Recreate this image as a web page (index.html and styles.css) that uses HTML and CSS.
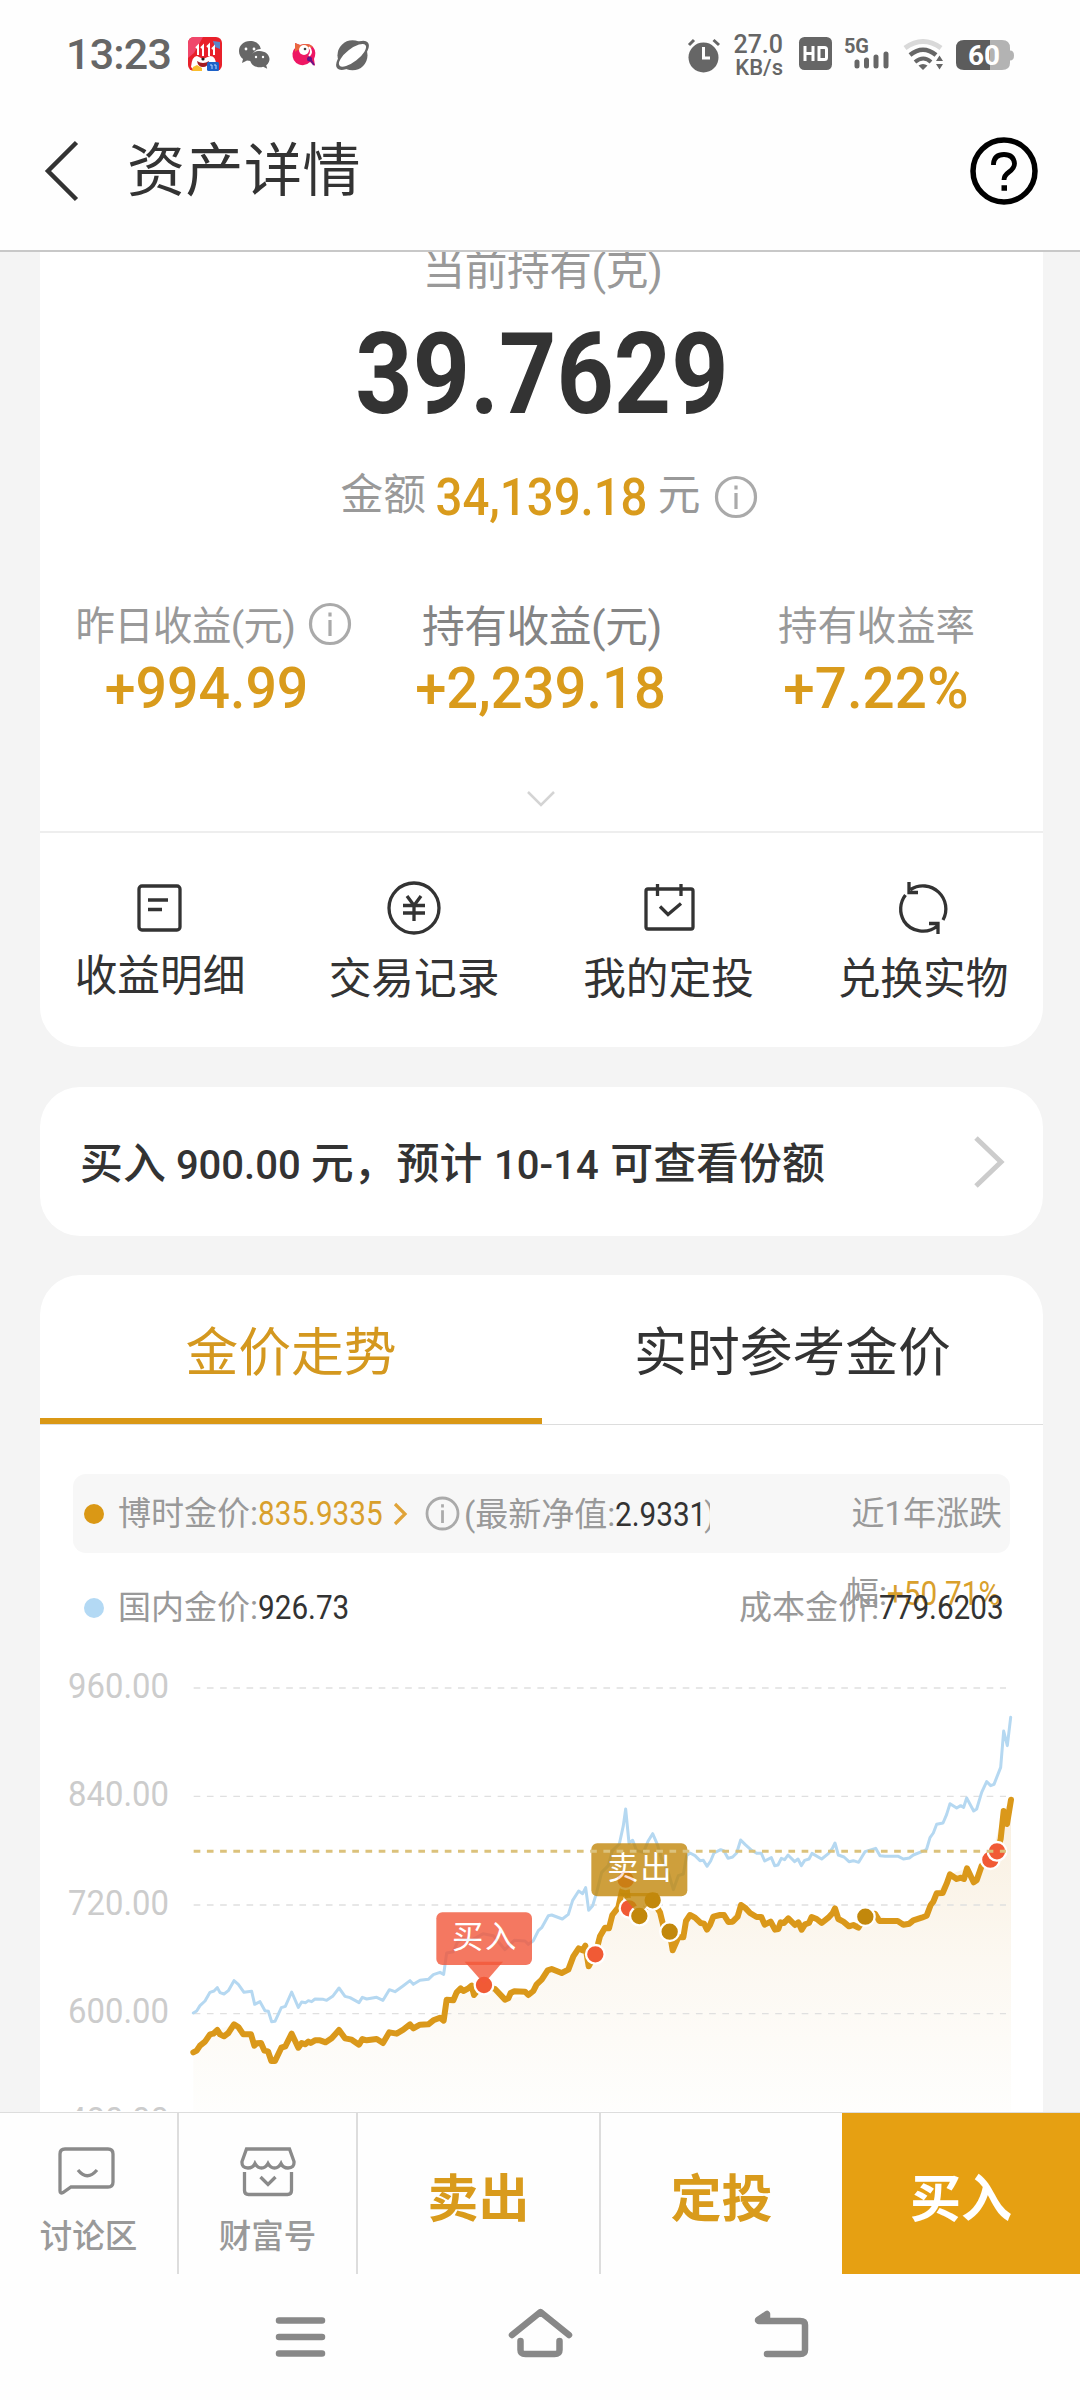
FILE: index.html
```html
<!DOCTYPE html>
<html lang="zh-CN">
<head>
<meta charset="utf-8">
<title>资产详情</title>
<link rel="stylesheet" href="styles.css">
</head>
<body>
<header class="top">
  <div class="status">
    <span class="clock">13:23</span>
    <svg class="st-left" width="182" height="38" viewBox="187 35 182 38">
      <rect x="188" y="37" width="34" height="34" rx="6" fill="#e8202a"/>
      <path d="M188 44q0-7 6-7h9l-9 16-6 5z" fill="#f0476b"/>
      <path d="M213 41l7 1v7l-5-2z" fill="#5a86c8"/>
      <path d="M196 48l2-2v9M201 48l2-2v10M207 47l2-2v11M212 49l2-2v8" fill="none" stroke="#fff" stroke-width="2"/>
      <path d="M191 67q1-11 6-11l6 3 7-3q6 0 6 9l-8 6h-13z" fill="#fff"/>
      <path d="M197 61q6 4 12 0-1 6-6 6t-6-6z" fill="#a31b22"/>
      <circle cx="203" cy="59" r="1.6" fill="#222"/>
      <path d="M193 67l4-2 5 3v3h-10z" fill="#f9bd2c"/>
      <rect x="207" y="62" width="12" height="9" rx="1.500" fill="#1c62c8"/>
      <path d="M210 65h2v4M214 65h2v4" stroke="#b7d5ff" fill="none"/>
      <g fill="#666">
        <path d="M250 41c-6.500 0-11 4.500-11 10 0 3.500 1.500 6 4 8l-1 4 5-2.500c2 .5 4 .5 5 .3-1.500-7 3-11.500 8.800-11.800-.9-5-5.300-8-10.800-8z"/>
        <path d="M259.500 51c-5.500 0-9.500 3.600-9.500 8s4 8.300 9.500 8.300c1.300 0 2.600-.2 3.700-.6l4 2-1-3.500c2.300-1.600 3.300-3.900 3.300-6.200 0-4.400-4.500-8-10-8z"/>
      </g>
      <g fill="#fff"><circle cx="246" cy="49" r="1.400"/><circle cx="254" cy="49" r="1.400"/><circle cx="256" cy="57" r="1.200"/><circle cx="263" cy="57" r="1.200"/></g>
      <path d="M295 43l5 2q9-3 13 2 4 5 1 12l1 7-5-4q-5 5-11 2.500-7-3-6.500-11 .5-4 3-6z" fill="#ee1764"/>
      <path d="M295 43l5 2q9-3 13 2l-9 3q-7-1-9 2z" fill="#e9683f"/>
      <circle cx="304" cy="50" r="5" fill="#fff"/>
      <circle cx="305" cy="49" r="1.300" fill="#444"/>
      <path d="M309 47q4 5 0 9" stroke="#fff" stroke-width="2" fill="none"/>
      <circle cx="309.500" cy="59" r="2.500" fill="#6a1286"/><path d="M310 59l4 6" stroke="#6a1286" stroke-width="2"/>
      <ellipse cx="352.500" cy="55.300" rx="20" ry="9" transform="rotate(-40 352.500 55.300)" fill="#666"/>
      <circle cx="352.500" cy="55.300" r="15" fill="#666"/>
      <ellipse cx="352.500" cy="55.300" rx="16.500" ry="6.300" transform="rotate(-38 352.500 55.300)" fill="#fff"/>
    </svg>
    <div class="st-right">
      <svg width="34" height="36" viewBox="686 37 34 36">
        <circle cx="702.500" cy="57.500" r="15" fill="#666"/>
        <path d="M688 45l5-5M712.500 40l5.500 5" stroke="#666" stroke-width="3"/>
        <path d="M702.500 47v11h6.500" stroke="#fff" stroke-width="3" fill="none"/>
      </svg>
      <div class="speed"><b>27.0</b><span>KB/s</span></div>
      <svg width="222" height="42" viewBox="796 33 222 42">
        <rect x="798" y="37" width="33" height="33" rx="5.500" fill="#666"/>
        <path d="M804 46v15M812 46v15M804 53.500h8M818 47.500h5.500q2 0 2 2v8q0 2-2 2h-5.500z" fill="none" stroke="#fff" stroke-width="3"/>
        <text x="843" y="52.500" class="g5" textLength="25">5G</text>
        <path d="M856 62v4M865.500 60v6M875 57v9M885 54v12" stroke="#666" stroke-width="5" stroke-linecap="round"/>
        <g fill="none">
          <path d="M904 48q18-13 36 0" stroke="#d9d9d9" stroke-width="5"/>
          <path d="M909 55q13-10.500 26 0" stroke="#666" stroke-width="4.500"/>
          <path d="M914 62q8.500-7 16 0" stroke="#666" stroke-width="4"/>
        </g>
        <path d="M922 70l-4.500-4.500q4.500-3 9 0zM935 61l3.500-5.500 3.500 5.500zM935 64l3.500 5.500 3.500-5.500z" fill="#666"/>
        <path d="M989 40h12q8 0 8 8v2.500q4 0 4 5t-4 5v2.500q0 7-8 7h-12z" fill="#b3b3b3"/>
        <path d="M963 40h26v30h-26q-8 0-8-7v-15q0-8 8-8z" fill="#5c5c5c"/>
        <text x="967" y="65" class="batt" textLength="32" lengthAdjust="spacingAndGlyphs">60</text>
      </svg>
    </div>
  </div>
  <div class="nav">
    <svg width="36" height="62" viewBox="44 140 36 62"><path d="M76.500 142.500L48 171l28.500 28.500" fill="none" stroke="#333" stroke-width="4.500"/></svg>
    <h1>资产详情</h1>
    <svg class="help" width="70" height="70" viewBox="0 0 70 70" fill="none" stroke="#000"><circle cx="35" cy="35" r="31" stroke-width="5.500"/><path d="M24.500 29v-1.500q1-9 10.500-9t10.500 9q0 4.500-5.500 8.500-5 3.500-5 8" stroke-width="4.800"/><path d="M32.500 52h5.500" stroke-width="5.500"/></svg>
  </div>
</header>

<main class="page">
  <section class="card asset">
    <p class="hold-label">当前持有(克)</p>
    <div class="hold"><span>39.7629</span></div>
    <div class="amount">
      <span class="cn">金额</span><span class="amount-num"><i>34,139.18</i></span><span class="cn">元</span>
      <svg class="info" viewBox="0 0 44 44"><circle cx="22" cy="22" r="19.500"/><path d="M22 18v16M22 10.500v4"/></svg>
    </div>
    <div class="stats">
      <div class="stat"><div class="stat-label s1"><span>昨日收益(元)</span><svg class="info" viewBox="0 0 44 44"><circle cx="22" cy="22" r="19.500"/><path d="M22 18v16M22 10.500v4"/></svg></div><div class="stat-num n1">+994.99</div></div>
      <div class="stat"><div class="stat-label s2"><span>持有收益(元)</span></div><div class="stat-num n2">+2,239.18</div></div>
      <div class="stat"><div class="stat-label s3"><span>持有收益率</span></div><div class="stat-num n3">+7.22%</div></div>
    </div>
    <svg class="more" width="30" height="18" viewBox="0 0 30 18"><path d="M2 2l13 13L28 2" fill="none" stroke="#d4d4d4" stroke-width="2.500"/></svg>
    <nav class="actions">
      <a class="a1"><svg viewBox="0 0 54 54"><rect x="6" y="5" width="41" height="44" rx="3"/><path d="M15 19h20M15 28.500h14"/></svg>收益明细</a>
      <a><svg viewBox="0 0 54 54"><circle cx="27" cy="27" r="25"/><path d="M20 15l7 9.500 7-9.500M16 24.500h22M16 32h22M27 24.500V40"/></svg>交易记录</a>
      <a><svg viewBox="0 0 54 54"><rect x="4" y="8" width="47" height="40" rx="2"/><path d="M15.500 3v12M39 3v12M18 25.500l8 8 13-11"/></svg>我的定投</a>
      <a><svg viewBox="0 0 54 54"><path d="M8 40A23 23 0 0 1 9.500 14M14.500 8.500A23 23 0 0 1 47 39M42 44.500A23 23 0 0 1 7.500 39.500M13 1v10.500h9M42 53V42.500h-9"/></svg>兑换实物</a>
    </nav>
  </section>

  <section class="card notice">
    <p>买入<b class="c1">900.00</b>元，预计<b class="c2">10-14</b>可查看份额</p>
    <svg width="32" height="54" viewBox="0 0 32 54"><path d="M3 3l25 24L3 51" fill="none" stroke="#ccc" stroke-width="5"/></svg>
  </section>

  <section class="card trend">
    <div class="tabs"><a class="on">金价走势</a><a>实时参考金价</a></div>
    <div class="legend main">
      <i class="dot gold"></i><span>博时金价:</span><b class="w1 y">835.9335</b>
      <svg class="arr" width="16" height="24" viewBox="0 0 16 24"><path d="M3 2l10 10-10 10" fill="none" stroke="#e0a43a" stroke-width="3.200"/></svg>
      <svg class="info sm" viewBox="0 0 44 44"><circle cx="22" cy="22" r="19.500"/><path d="M22 18v16M22 10.500v4"/></svg>
      <span class="nav-val">(最新净值:<b class="w2">2.9331</b>)</span>
      <div class="change">近1年涨跌<br>幅:<b class="w5 y">+50.71%</b></div>
    </div>
    <div class="legend second">
      <i class="dot blue"></i><span>国内金价:</span><b class="w3">926.73</b>
      <span class="cost">成本金价:<b class="w4">779.6203</b></span>
    </div>
    <svg class="chart" width="1003" height="472" viewBox="-360 -60 3009 1416">
      <defs><linearGradient id="fill" gradientUnits="userSpaceOnUse" x1="0" y1="420" x2="0" y2="1380"><stop offset="0" stop-color="#f9efdf"/><stop offset=".5" stop-color="#fcf8f1"/><stop offset="1" stop-color="#fefefd"/></linearGradient></defs>
      <path fill="url(#fill)" d="M100 1180L172 1113 222 1096 273 1126 334 1206 395 1124 415 1166 537 1113 597 1157 669 1152 750 1096 851 1085 860 1022 902 988 972 978 1035 1022 1105 1008 1175 930 1205 942 1225 932 1256 868 1306 886 1335 806 1375 745 1397 665 1407 748 1438 770 1478 724 1529 818 1538 874 1570 835 1590 768 1641 812 1680 768 1705 789 1743 738 1804 774 1845 812 1885 778 1925 812 2005 776 2025 748 2050 788 2095 806 2145 764 2230 797 2300 770 2330 703 2370 646 2421 628 2441 670 2491 602 2531 456 2553 420V1380H100z"/>
      <g stroke="#e0e0e0" stroke-width="4" stroke-dasharray="20 19.650"><path d="M101 87H2538M101 412H2538M101 738H2538M101 1064H2538"/></g>
      <g class="axis"><text x="-276" y="116" textLength="303" lengthAdjust="spacingAndGlyphs">960.00</text><text x="-276" y="441" textLength="303" lengthAdjust="spacingAndGlyphs">840.00</text><text x="-276" y="767" textLength="303" lengthAdjust="spacingAndGlyphs">720.00</text><text x="-276" y="1092" textLength="303" lengthAdjust="spacingAndGlyphs">600.00</text><text x="-276" y="1418" textLength="303" lengthAdjust="spacingAndGlyphs">480.00</text></g>
      <polyline class="ln blue-ln" points="100,1062 110,1056 120,1040 135,1026 150,1000 162,996 172,986 180,1001 192,1005 205,995 222,965 235,976 252,1000 275,997 284,1036 300,1028 315,1055 325,1057 335,1088 345,1087 364,1046 376,1042 395,999 415,1045 425,1029 437,1031 445,1025 455,1028 465,1020 490,1021 500,1024 518,1012 537,987 555,1012 570,1016 597,1031 607,1015 620,1020 650,1015 669,1024 688,992 705,998 730,980 750,965 760,976 780,964 805,961 820,947 840,940 851,946 860,882 880,878 892,850 910,838 930,845 950,835 970,824 1000,830 1035,872 1063,844 1095,846 1105,856 1120,845 1135,815 1145,806 1165,770 1175,768 1207,780 1225,766 1238,724 1256,696 1268,704 1277,686 1286,754 1298,740 1310,700 1325,640 1345,620 1357,575 1378,555 1390,500 1397,450 1407,552 1418,544 1430,575 1450,580 1465,545 1478,524 1492,556 1505,600 1525,640 1540,692 1555,650 1570,645 1580,590 1590,582 1605,590 1620,605 1630,604 1641,622 1652,606 1662,582 1682,572 1692,576 1704,598 1718,594 1730,582 1742,543 1755,556 1775,574 1790,583 1804,583 1814,606 1834,596 1844,620 1854,618 1864,598 1874,602 1884,588 1904,608 1914,600 1924,620 1934,604 1947,600 1956,583 1985,600 2005,584 2017,568 2025,552 2035,588 2052,594 2067,608 2080,605 2096,610 2115,578 2147,568 2160,590 2175,592 2215,592 2230,600 2248,597 2260,588 2295,574 2300,570 2310,536 2320,522 2330,496 2349,492 2360,466 2370,434 2390,447 2402,440 2411,445 2420,417 2441,456 2450,450 2465,400 2480,368 2492,380 2502,376 2522,325 2531,216 2542,260 2552,175"/>
      <polyline class="ln gold-ln" points="100,1180 110,1175 120,1160 135,1148 150,1126 160,1124 172,1113 180,1126 192,1132 205,1122 222,1096 235,1104 250,1126 273,1126 283,1160 290,1153 303,1152 313,1175 324,1177 334,1206 345,1206 364,1166 376,1162 395,1124 415,1166 425,1152 435,1156 445,1148 452,1152 465,1144 480,1144 497,1150 515,1138 537,1113 555,1138 575,1142 597,1157 607,1140 620,1144 650,1140 669,1152 688,1120 710,1124 730,1112 750,1096 760,1108 780,1097 805,1096 820,1084 840,1076 851,1085 860,1022 880,1024 890,1000 902,988 910,996 925,988 935,980 942,1008 960,985 972,978 1005,990 1035,1022 1045,1018 1052,1002 1063,997 1095,998 1105,1008 1120,996 1130,976 1145,962 1163,934 1175,930 1205,942 1225,932 1240,892 1256,868 1268,874 1276,860 1286,922 1306,886 1320,832 1335,806 1347,808 1357,768 1375,745 1385,700 1397,665 1407,748 1438,770 1478,724 1500,760 1510,800 1529,818 1538,874 1555,835 1570,835 1578,786 1590,768 1605,776 1622,792 1632,794 1641,812 1650,798 1660,773 1680,768 1692,768 1705,789 1718,788 1733,773 1743,738 1755,746 1770,762 1790,774 1804,774 1814,797 1832,788 1845,812 1855,810 1862,790 1872,792 1885,778 1905,798 1915,790 1925,812 1935,796 1947,792 1955,774 1970,780 1985,792 2005,776 2018,762 2025,748 2035,780 2050,788 2067,802 2080,798 2095,806 2116,772 2145,764 2158,786 2213,786 2230,797 2248,794 2260,784 2285,776 2300,770 2312,738 2320,728 2330,703 2348,702 2360,674 2370,646 2390,660 2403,656 2412,660 2421,628 2441,670 2450,664 2465,620 2491,602 2511,577 2522,540 2531,456 2541,495 2553,422"/>
      <g class="pt red"><circle cx="972" cy="978" r="28"/><circle cx="1306" cy="886" r="28"/><circle cx="1397" cy="662" r="28"/><circle cx="1407" cy="748" r="28"/><circle cx="2491" cy="602" r="28"/><circle cx="2511" cy="577" r="28"/></g>
      <g class="pt brown"><circle cx="1438" cy="771" r="28"/><circle cx="1478" cy="724" r="28"/><circle cx="1529" cy="818" r="28"/><circle cx="2116" cy="773" r="28"/></g>
      <g opacity=".8"><rect x="829" y="760" width="287" height="158" rx="18" fill="#f2573a"/><text class="tip" x="975" y="868">买入</text></g>
      <path d="M914 908h115l-57 66z" fill="#f2573a" opacity=".8"/>
      <g opacity=".8"><rect x="1294" y="553" width="288" height="159" rx="18" fill="#c2880c"/><text class="tip" x="1441" y="661">卖出</text></g>
      <path d="M1380 702h115l-57 66z" fill="#c2880c" opacity=".8"/>
      <path d="M101 577H2538" stroke="#dcc27c" stroke-width="9" stroke-dasharray="20 19.650"/>
    </svg>
  </section>
</main>

<footer class="bar">
  <a class="mini chat"><svg viewBox="0 0 60 54"><path d="M8 4h43q5 0 5 5v28q0 5-5 5H14l-8 5.500q-3 1.500-3-1.500V9q0-5 5-5z"/><path d="M21 25q9 11.500 19 0"/></svg>讨论区</a>
  <a class="mini"><svg viewBox="0 0 60 54"><path d="M8.500 4h43l4.500 12.500q.5 6.500-6 6.500-5 0-7-4.500-2.500 4.500-6.500 4.500t-6.500-4.500q-2.500 4.500-6.500 4.500t-6.500-4.500q-2 4.500-7 4.500-6.500 0-6-6.500zM6.500 27v18.500q0 4 4 4h39q4 0 4-4V27M22.500 32l7.500 7.500 7.500-7.500"/></svg>财富号</a>
  <a class="big">卖出</a>
  <a class="big">定投</a>
  <a class="big buy">买入</a>
</footer>
<div class="sys">
  <svg width="540" height="60" viewBox="270 2304 540 60" fill="none" stroke="#888" stroke-linecap="round" stroke-linejoin="round" stroke-width="6.500"><path d="M279 2320.500h43M279 2337h43M279 2353.500h43M512 2335l28.500-23 28.500 23M520.500 2341v9q0 4 5 4h29q5 0 5-4v-9M767 2354h33q5 0 5-4v-25q0-4-5-4h-41"/><path d="M758 2320l9-6v6z" fill="#888"/></svg>
</div>
</body>
</html>
```
FILE: styles.css
```css
* { box-sizing: border-box; }
body {
  margin: 0;
  width: 1080px;
  height: 2400px;
  overflow: hidden;
  display: flex;
  flex-direction: column;
  background: #fefefe;
  color: #333;
  font-family: Roboto, "Noto Sans CJK SC", sans-serif;
}
h1, p { margin: 0; font-weight: 400; }
b, i { font-style: normal; font-weight: 400; }
svg { flex: none; display: block; }

.top { height: 252px; flex: none; border-bottom: 2px solid #c8c8c8; }
.status { height: 92px; padding: 33px 61px 0 66px; display: flex; align-items: flex-start; }
.clock { width: 121px; font: 500 43px/42px Roboto, sans-serif; color: #666; letter-spacing: -.8px; }
.st-left { margin-top: 2px; }
.st-right { margin-left: auto; display: flex; align-items: flex-start; gap: 14px; }
.st-right > svg:first-child { margin-top: 4px; }
.speed { width: 48px; display: flex; flex-direction: column; align-items: flex-end; color: #666; font: 500 22px/23px Roboto, sans-serif; }
.speed b { font: 500 25px/23px Roboto, sans-serif; }
.g5 { font: 700 20px Roboto, sans-serif; fill: #666; }
.batt { font: 700 27px Roboto, sans-serif; fill: #fff; }

.nav { height: 158px; padding: 0 41px 0 44px; display: flex; align-items: center; }
.nav h1 { margin-left: 47px; font-size: 58px; line-height: 80px; letter-spacing: .5px; }
.help { margin-left: auto; }

.page { flex: 1; min-height: 0; overflow: hidden; background: #f4f4f4; padding: 0 37px 0 40px; }
.card { background: #fff; border-radius: 40px; overflow: hidden; }
.asset { height: 795px; border-radius: 0 0 40px 40px; display: flex; flex-direction: column; align-items: center; }
.hold-label { height: 60px; margin-top: -12px; padding-left: 2px; font-size: 42.7px; line-height: 60px; letter-spacing: -.4px; color: #999; }
.hold { height: 140px; margin-top: 5px; font: 700 113px/140px Roboto, sans-serif; }
.hold span { display: inline-block; transform: scaleX(.885); }
.amount { margin-top: 20px; height: 64px; padding-left: 15px; display: flex; align-items: center; font-size: 42.7px; color: #999; }
.cn { line-height: 60px; padding-bottom: 4px; }
.amount-num { width: 232px; display: flex; justify-content: center; font-weight: 500; font-size: 52px; color: #d99b1c; }
.amount-num i { transform: scaleX(.91); font-weight: 500; }
.info { width: 44px; height: 44px; fill: none; stroke: #aaa; stroke-width: 3.200; }
.amount .info { margin-left: 13px; }
.stats { width: 100%; margin-top: 64px; height: 130px; display: grid; grid-template-columns: 334px 334px 334px; }
.stat { display: flex; flex-direction: column; align-items: center; }
.stat-label { height: 62px; display: flex; align-items: center; color: #999; font-size: 39.4px; }
.stat-label span { padding-bottom: 3px; }
.s1 { padding-left: 14px; letter-spacing: -.6px; }
.s1 .info { margin-left: 13px; }
.s2 { padding-left: 2px; letter-spacing: -.4px; font-size: 42.7px; color: #848484; }
.s3 { padding-left: 3px; }
.stat-num { font: 500 58px/66px Roboto, sans-serif; color: #d99b1c; white-space: nowrap; }
.n1 { transform: scaleX(.955); }
.n2 { transform: scaleX(.968); }
.n3 { transform: scaleX(.975); padding-left: 2px; }
.more { margin-top: 67px; margin-right: 2px; }
.actions { width: 100%; margin-top: 23px; border-top: 2px solid #eee; flex: 1; padding-top: 48px; display: grid; grid-template-columns: 240px 268px 241px 268px; }
.actions a { display: flex; flex-direction: column; align-items: center; font-size: 42.7px; line-height: 60px; gap: 14px; }
.actions .a1 { gap: 11px; }
.actions svg { width: 54px; height: 54px; fill: none; stroke: #333; stroke-width: 3.300; }

.notice { margin-top: 40px; height: 149px; padding: 0 38px 0 40px; display: flex; align-items: center; justify-content: space-between; }
.notice p { padding-bottom: 4px; font-size: 42.9px; font-weight: 500; display: flex; align-items: baseline; }
.notice b { font-weight: 500; font-size: 40px; text-align: center; }
.c1 { width: 145px; }
.c2 { width: 128px; }

.trend { margin-top: 39px; height: 838px; border-radius: 40px 40px 0 0; }
.tabs { height: 150px; display: grid; grid-template-columns: 502px 1fr; border-bottom: 1px solid #ddd; font-size: 52.800px; line-height: 157px; text-align: center; }
.tabs a { height: 149px; }
.tabs .on { color: #d4981f; border-bottom: 6px solid #da9815; }
.legend { width: 937px; margin-left: 33px; padding-left: 11px; display: flex; align-items: center; font-size: 33px; line-height: 84px; color: #999; }
.main { margin-top: 49px; height: 79px; background: #f7f7f7; border-radius: 13px; }
.dot { width: 20px; height: 20px; border-radius: 50%; margin-right: 14px; }
.gold { background: #da9815; }
.blue { background: #b3d9f4; }
.legend b { display: inline-block; color: #333; transform: scaleX(.9); transform-origin: 0 50%; white-space: nowrap; }
.legend .y { color: #d9a02c; }
.w1 { width: 124px; }
.w2 { width: 89px; }
.w3 { width: 92px; }
.w4 { width: 123px; }
.w5 { width: 115px; }
.arr { margin: 0 17px 0 10px; }
.sm { width: 35px; height: 35px; margin-right: 4px; stroke-width: 3.500; }
.nav-val { width: 246px; height: 79px; line-height: 81px; overflow: hidden; white-space: nowrap; }
.change { margin-left: auto; margin-right: 8px; width: 170px; align-self: flex-start; line-height: 80px; text-align: right; white-space: nowrap; }
.second { margin-top: 15px; height: 79px; }
.cost { margin-left: auto; margin-right: 8px; position: relative; }
.chart { margin-top: -8px; }
.axis { font: 400 106px Roboto, sans-serif; fill: #ccc; }
.ln { fill: none; stroke-linejoin: round; stroke-linecap: round; }
.blue-ln { stroke: #b5d8f1; stroke-width: 9; }
.gold-ln { stroke: #da981a; stroke-width: 18; }
.pt { stroke: #fff; stroke-width: 7; }
.red { fill: #f15a35; }
.brown { fill: #c2880c; }
.tip { font-size: 94px; fill: #fff; text-anchor: middle; letter-spacing: 5px; }

.bar { height: 162px; flex: none; border-top: 1px solid #ddd; display: grid; grid-template-columns: 179px 179px 243px 241px 1fr; grid-template-rows: 161px; }
.bar a { border-right: 2px solid #ddd; }
.mini { display: flex; flex-direction: column; align-items: center; padding-top: 32px; font-size: 32.5px; font-weight: 500; line-height: 46px; gap: 15px; color: #999; }
.mini svg { width: 60px; height: 54px; fill: none; stroke: #8a8a8a; stroke-width: 3.300; }
.chat svg { margin-right: 3px; }
.big { padding-top: 14px; font-size: 51px; font-weight: 700; line-height: 146px; text-align: center; color: #d99b1c; }
.bar a:nth-child(4) { border: 0; }
.bar .buy { border: 0; background: #e6a012; color: #fff; }
.sys { height: 126px; flex: none; display: flex; justify-content: center; padding-top: 30px; }
```
